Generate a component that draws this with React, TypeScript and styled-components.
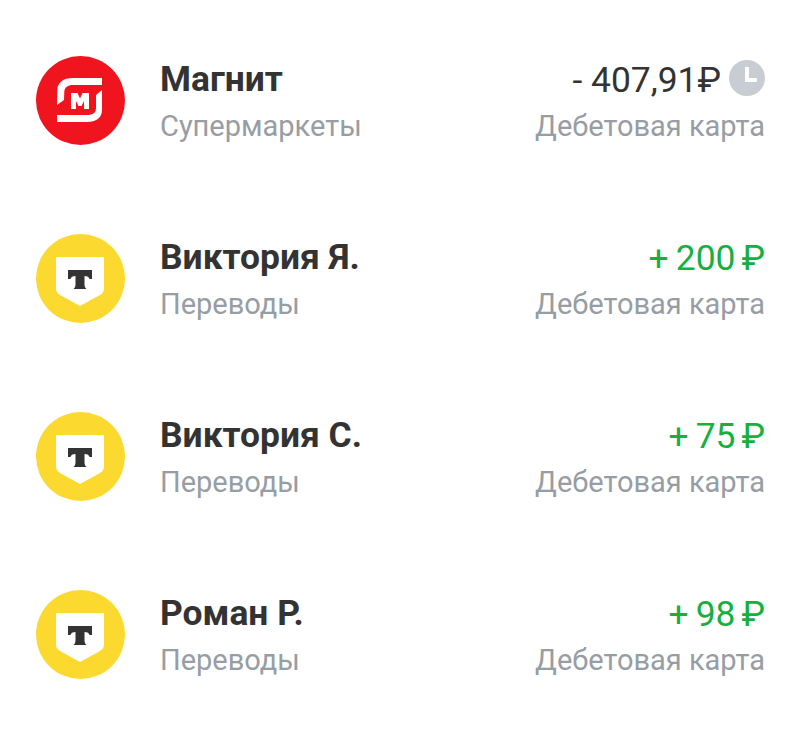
import React from "react";
import styled, { createGlobalStyle } from "styled-components";

const Global = createGlobalStyle`
  html, body { margin: 0; padding: 0; background: #fff; }
  body { font-family: Roboto, "Noto Sans", sans-serif; }
`;

const Page = styled.div`
  width: 800px;
  height: 729px;
  box-sizing: border-box;
  padding: 11px 35px 0 36px;
  overflow: hidden;
  background: #fff;
`;

const Row = styled.div`
  height: 178px;
  display: flex;
  align-items: center;
`;

const Avatar = styled.svg`
  width: 89px;
  height: 89px;
  flex: none;
  display: block;
`;

const Info = styled.div`
  margin-left: 35px;
  flex: 1;
  min-width: 0;
  padding-top: 7px;
`;

const Title = styled.div`
  font-size: 35.4px;
  line-height: 45px;
  font-weight: 700;
  color: #333333;
`;

const Sub = styled.div`
  font-size: 29px;
  line-height: 48px;
  color: #979da4;
`;

const Side = styled.div`
  display: flex;
  flex-direction: column;
  align-items: flex-end;
  padding-top: 7px;
`;

const AmountLine = styled.div`
  display: flex;
  align-items: center;
  gap: 8px;
  height: 45px;
`;

const Amount = styled.div<{ $positive?: boolean }>`
  font-size: 35.4px;
  line-height: 46px;
  white-space: pre;
  color: ${(p) => (p.$positive ? "#16b03f" : "#333333")};
`;

const Currency = styled.span<{ $spaced?: boolean }>`
  margin-left: ${(p) => (p.$spaced ? "6px" : "0")};
`;

const Clock = styled.svg`
  width: 36px;
  height: 36px;
  flex: none;
  display: block;
  margin-top: -4px;
`;

const MagnitLogo = () => (
  <Avatar viewBox="0 0 89 89">
    <circle cx="44.5" cy="44.5" r="44.5" fill="#f0141e" />
    <path
      d="M66 22H37C27 22 21.500 26.500 21.300 34L21 49L28 44L28.300 36C28.500 31 32 29 37 29H66Z"
      fill="#fff"
    />
    <path
      d="M21 66H51C60 66 66 62 66 54V34L60 39V52C60 57 56.500 59 51 59H21Z"
      fill="#fff"
    />
    <path
      d="M35 37H41.500L44 42.500L46.500 37H53V53H48V45L45.500 50H42.500L40 45V53H35Z"
      fill="#fff"
    />
  </Avatar>
);

const TinkoffLogo = () => (
  <Avatar viewBox="0 0 89 89">
    <circle cx="44.5" cy="44.5" r="44.5" fill="#fcd92f" />
    <path
      d="M20 23H68V54C68 57 67 59 64 61L44 72L24 61C21 59 20 57 20 54Z"
      fill="#fff"
    />
    <path
      d="M32 36H56V45H53.500C53 43 51.500 42 48.500 42V50C48.500 52 49 54 50.500 55H37.500C39 54 39.500 52 39.500 50V42C36.500 42 35 43 34.500 45H32Z"
      fill="#333333"
    />
  </Avatar>
);

const rows = [
  { logo: "m", title: "Магнит", sub: "Супермаркеты", amount: "- 407,91", pending: true },
  { logo: "t", title: "Виктория Я.", sub: "Переводы", amount: "+\u2009200", positive: true },
  { logo: "t", title: "Виктория С.", sub: "Переводы", amount: "+\u200975", positive: true },
  { logo: "t", title: "Роман Р.", sub: "Переводы", amount: "+\u200998", positive: true },
];

export default function App() {
  return (
    <Page>
      <Global />
      {rows.map((r) => (
        <Row key={r.title}>
          {r.logo === "m" ? <MagnitLogo /> : <TinkoffLogo />}
          <Info>
            <Title>{r.title}</Title>
            <Sub>{r.sub}</Sub>
          </Info>
          <Side>
            <AmountLine>
              <Amount $positive={r.positive}>
                {r.amount}
                <Currency $spaced={r.positive}>₽</Currency>
              </Amount>
              {r.pending && (
                <Clock viewBox="0 0 36 36">
                  <circle cx="18" cy="18" r="18" fill="#c8ccd3" />
                  <path d="M16 7H20V18H28V22H16Z" fill="#fff" />
                </Clock>
              )}
            </AmountLine>
            <Sub>Дебетовая карта</Sub>
          </Side>
        </Row>
      ))}
    </Page>
  );
}
